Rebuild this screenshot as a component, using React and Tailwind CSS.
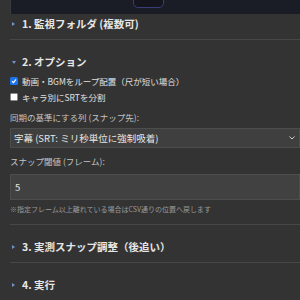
import React from 'react';

function Marker({ open }) {
  return open ? (
    <svg width="4" height="3" viewBox="0 0 4 3" className="shrink-0">
      <path d="M0 0 L4 0 L2 3 Z" fill="#6f95c8" />
    </svg>
  ) : (
    <svg width="3" height="4" viewBox="0 0 3 4" className="shrink-0">
      <path d="M0 0 L3 2 L0 4 Z" fill="#6f95c8" />
    </svg>
  );
}

function Summary({ open, children }) {
  return (
    <div className="flex items-center h-[14px] pl-[2px]">
      <div className="w-[10px] flex items-center">
        <Marker open={open} />
      </div>
      <span className="text-[10.5px] font-bold text-[#e6e6e6] leading-[14px] whitespace-nowrap">{children}</span>
    </div>
  );
}

function Checkbox({ checked, label }) {
  return (
    <label className="flex items-center h-[16px]">
      {checked ? (
        <span className="w-[8px] h-[8px] rounded-[1.5px] bg-[#1a73f0] flex items-center justify-center">
          <svg width="6" height="6" viewBox="0 0 6 6">
            <path d="M1 3.2 L2.5 4.6 L5 1.4" stroke="white" strokeWidth="1.2" fill="none" />
          </svg>
        </span>
      ) : (
        <span className="w-[8px] h-[8px] rounded-[1.5px] bg-white border border-[#8a8a8a]" />
      )}
      <span className="ml-[4px] text-[8.5px] text-[#e0e0e0] whitespace-nowrap">{label}</span>
    </label>
  );
}

export default function App() {
  return (
    <div
      className="w-[300px] h-[300px] overflow-hidden bg-[#333333] pl-[10px]"
      style={{ fontFamily: '"Noto Sans CJK JP", "Noto Sans", sans-serif' }}
    >
      {/* top panel */}
      <div className="h-[14px] bg-[#1b1d26] border-l border-[#3a3a3a] flex overflow-hidden">
        <div className="ml-[122px] mt-[-10px] w-[31px] h-[18px] rounded-[5px] bg-[#14151d] border border-[#3b3d78]" />
      </div>

      {/* section 1 */}
      <div className="pt-[3px] pb-[8px] border-b border-[#474747]">
        <Summary>1. 監視フォルダ (複数可)</Summary>
      </div>

      {/* section 2 */}
      <div className="mt-[12px] pt-[3px] pb-[10px] border-b border-[#474747]">
        <Summary open>2. オプション</Summary>
        <div className="mt-[4px]">
          <Checkbox checked label="動画・BGMをループ配置（尺が短い場合）" />
          <Checkbox label="キャラ別にSRTを分割" />
        </div>
        <div className="mt-[6px] h-[12px] leading-[12px] text-[8.5px] text-[#c4c4c4] whitespace-nowrap">
          同期の基準にする列 (スナップ先):
        </div>
        <div className="mt-[5px] h-[20px] bg-[#3f3f3f] border border-[#4d4d4d] flex items-center pl-[3px] pr-[4px]">
          <span className="flex-1 text-[9.5px] text-[#e6e6e6] whitespace-nowrap">字幕 (SRT: ミリ秒単位に強制吸着)</span>
          <svg width="6" height="4" viewBox="0 0 6 4">
            <path d="M0.5 0.5 L3 3 L5.5 0.5" stroke="#cfcfcf" strokeWidth="1" fill="none" />
          </svg>
        </div>
        <div className="mt-[7px] h-[12px] leading-[12px] text-[8.5px] text-[#c4c4c4] whitespace-nowrap">
          スナップ閾値 (フレーム):
        </div>
        <div className="mt-[7px] h-[26px] bg-[#414141] border border-[#4d4d4d] flex items-center pl-[4px]">
          <span className="text-[9.5px] text-[#e6e6e6]">5</span>
        </div>
        <div className="mt-[4px] h-[10px] leading-[10px] text-[7px] text-[#9a9a9a] whitespace-nowrap">
          ※指定フレーム以上離れている場合はCSV通りの位置へ戻します
        </div>
      </div>

      {/* section 3 */}
      <div className="mt-[12px] pt-[3px] pb-[8px] border-b border-[#474747]">
        <Summary>3. 実測スナップ調整（後追い）</Summary>
      </div>

      {/* section 4 */}
      <div className="mt-[12px] pt-[3px] pb-[8px]">
        <Summary>4. 実行</Summary>
      </div>
    </div>
  );
}
